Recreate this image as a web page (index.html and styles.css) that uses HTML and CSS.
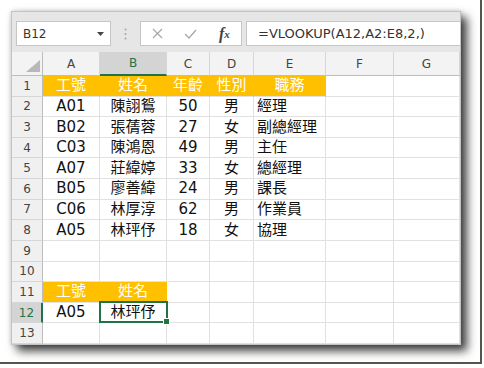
FILE: index.html
```html
<!DOCTYPE html>
<html lang="zh-Hant">
<head>
    <meta charset="utf-8">
    <title>VLOOKUP 範例</title>
    <link rel="stylesheet" href="styles.css">
</head>

<body>
<div class="shot">
    <div class="excel">
        <div class="toolbar">
            <div class="namebox">
                <span>B12</span>
                <svg width="7" height="4" viewBox="0 0 7 4"><polygon points="0,0 7,0 3.5,4" fill="#444"/></svg>
            </div>
            <div class="grip">
                <svg width="3" height="12" viewBox="0 0 3 12">
                    <circle cx="1.5" cy="1.5" r="1" fill="#a6a6a6"/>
                    <circle cx="1.5" cy="6" r="1" fill="#a6a6a6"/>
                    <circle cx="1.5" cy="10.5" r="1" fill="#a6a6a6"/>
                </svg>
            </div>
            <div class="buttons">
                <span class="btn">
                    <svg width="11" height="11" viewBox="0 0 11 11"><path d="M1 1 L10 10 M10 1 L1 10" stroke="#a8a8a8" stroke-width="1.2"/></svg>
                </span>
                <span class="btn">
                    <svg width="13" height="10" viewBox="0 0 13 10"><path d="M1 5 L5 9 L12 1" stroke="#a8a8a8" stroke-width="1.3" fill="none"/></svg>
                </span>
                <span class="btn fx">f<sub>x</sub></span>
            </div>
            <div class="formula">=VLOOKUP(A12,A2:E8,2,)</div>
        </div>

        <div class="sheet">
            <!-- en-têtes de colonnes -->
            <div class="corner">
                <svg width="14" height="12" viewBox="0 0 14 12"><polygon points="14,0 14,12 0,12" fill="#b8b8b8"/></svg>
            </div>
            <div class="colhead">A</div>
            <div class="colhead active">B</div>
            <div class="colhead">C</div>
            <div class="colhead">D</div>
            <div class="colhead">E</div>
            <div class="colhead">F</div>
            <div class="colhead">G</div>

            <div class="rowhead">1</div>
            <div class="c y">工號</div>
            <div class="c y">姓名</div>
            <div class="c y">年齡</div>
            <div class="c y">性別</div>
            <div class="c y">職務</div>
            <div class="c"></div>
            <div class="c"></div>

            <div class="rowhead">2</div>
            <div class="c">A01</div>
            <div class="c">陳詡鴛</div>
            <div class="c">50</div>
            <div class="c">男</div>
            <div class="c l">經理</div>
            <div class="c"></div>
            <div class="c"></div>

            <div class="rowhead">3</div>
            <div class="c">B02</div>
            <div class="c">張蒨蓉</div>
            <div class="c">27</div>
            <div class="c">女</div>
            <div class="c l">副總經理</div>
            <div class="c"></div>
            <div class="c"></div>

            <div class="rowhead">4</div>
            <div class="c">C03</div>
            <div class="c">陳鴻恩</div>
            <div class="c">49</div>
            <div class="c">男</div>
            <div class="c l">主任</div>
            <div class="c"></div>
            <div class="c"></div>

            <div class="rowhead">5</div>
            <div class="c">A07</div>
            <div class="c">莊緯婷</div>
            <div class="c">33</div>
            <div class="c">女</div>
            <div class="c l">總經理</div>
            <div class="c"></div>
            <div class="c"></div>

            <div class="rowhead">6</div>
            <div class="c">B05</div>
            <div class="c">廖善緯</div>
            <div class="c">24</div>
            <div class="c">男</div>
            <div class="c l">課長</div>
            <div class="c"></div>
            <div class="c"></div>

            <div class="rowhead">7</div>
            <div class="c">C06</div>
            <div class="c">林厚淳</div>
            <div class="c">62</div>
            <div class="c">男</div>
            <div class="c l">作業員</div>
            <div class="c"></div>
            <div class="c"></div>

            <div class="rowhead">8</div>
            <div class="c">A05</div>
            <div class="c">林玶伃</div>
            <div class="c">18</div>
            <div class="c">女</div>
            <div class="c l">協理</div>
            <div class="c"></div>
            <div class="c"></div>

            <div class="rowhead">9</div>
            <div class="c"></div>
            <div class="c"></div>
            <div class="c"></div>
            <div class="c"></div>
            <div class="c"></div>
            <div class="c"></div>
            <div class="c"></div>

            <div class="rowhead">10</div>
            <div class="c"></div>
            <div class="c"></div>
            <div class="c"></div>
            <div class="c"></div>
            <div class="c"></div>
            <div class="c"></div>
            <div class="c"></div>

            <div class="rowhead">11</div>
            <div class="c y">工號</div>
            <div class="c y">姓名</div>
            <div class="c"></div>
            <div class="c"></div>
            <div class="c"></div>
            <div class="c"></div>
            <div class="c"></div>

            <div class="rowhead active">12</div>
            <div class="c">A05</div>
            <div class="c sel">林玶伃</div>
            <div class="c"></div>
            <div class="c"></div>
            <div class="c"></div>
            <div class="c"></div>
            <div class="c"></div>

            <div class="rowhead">13</div>
            <div class="c"></div>
            <div class="c"></div>
            <div class="c"></div>
            <div class="c"></div>
            <div class="c"></div>
            <div class="c"></div>
            <div class="c"></div>
        </div>
    </div>
</div>
</body>
</html>
```

FILE: styles.css
```css
body {
    margin: 0;
    background: #ffffff;
    font-family: "DejaVu Sans", "Noto Sans CJK TC", sans-serif;
}

.shot {
    width: 482px;
    height: 364px;
    box-sizing: border-box;
    padding: 11px 0 0 11px;
    border-right: 2px solid #56564e;
    border-bottom: 2px solid #56564e;
}

.excel {
    width: 450px;
    height: 334px;
    box-sizing: border-box;
    border: 1px solid #c4c4c4;
    background: #ffffff;
    box-shadow: 0 0 5px rgba(0, 0, 0, 0.18), 6px 6px 9px rgba(0, 0, 0, 0.75);
    display: flex;
    flex-direction: column;
    overflow: hidden;
}

/* barre de formule */
.toolbar {
    flex: none;
    height: 40px;
    box-sizing: border-box;
    display: flex;
    align-items: flex-start;
    padding: 9px 0 0 4px;
    background: #e6e6e6;
}

.namebox {
    width: 95px;
    height: 25px;
    box-sizing: border-box;
    display: flex;
    align-items: center;
    justify-content: space-between;
    padding: 0 6px 0 6px;
    border: 1px solid #c6c6c6;
    background: #ffffff;
    font-size: 12px;
    color: #333333;
}

.grip {
    width: 29px;
    height: 25px;
    display: flex;
    align-items: center;
    justify-content: center;
}

.buttons {
    width: 102px;
    height: 25px;
    box-sizing: border-box;
    display: flex;
    border: 1px solid #c6c6c6;
    background: #ffffff;
    margin-right: 4px;
}

.btn {
    width: 34px;
    display: flex;
    align-items: center;
    justify-content: center;
}

.fx {
    font-family: "Liberation Serif", serif;
    font-style: italic;
    font-weight: bold;
    font-size: 16px;
    color: #444444;
}

.fx sub {
    font-size: 11px;
    vertical-align: -2px;
}

.formula {
    flex: 1;
    height: 25px;
    box-sizing: border-box;
    display: flex;
    align-items: center;
    padding-left: 11px;
    border: 1px solid #c6c6c6;
    border-right: none;
    background: #ffffff;
    font-size: 13px;
    color: #333333;
}

/* feuille */
.sheet {
    flex: 1;
    display: grid;
    grid-template-columns: 31px 57px 67px 43px 44px 72px 68px 66px;
    grid-template-rows: 24px repeat(13, 1fr);
}

.corner {
    display: flex;
    align-items: flex-end;
    justify-content: flex-end;
    padding: 0 2px 3px 0;
    background: #f3f3f3;
    border-right: 1px solid #bdbdbd;
    border-bottom: 1px solid #bdbdbd;
}

.colhead {
    display: flex;
    align-items: center;
    justify-content: center;
    background: #f3f3f3;
    border-right: 1px solid #d6d6d6;
    border-bottom: 1px solid #bdbdbd;
    font-size: 12px;
    color: #444444;
}

.colhead.active {
    background: #d4d4d4;
    border-bottom: 2px solid #217346;
    color: #217346;
}

.rowhead {
    display: flex;
    align-items: center;
    justify-content: center;
    background: #f0f0f0;
    border-right: 1px solid #bdbdbd;
    border-bottom: 1px solid #d6d6d6;
    font-size: 12px;
    color: #444444;
}

.rowhead.active {
    background: #d4d4d4;
    border-right: 2px solid #217346;
    color: #217346;
}

.c {
    display: flex;
    align-items: center;
    justify-content: center;
    border-right: 1px solid #e1e1e1;
    border-bottom: 1px solid #e1e1e1;
    font-size: 15px;
    line-height: 1;
    color: #111111;
    white-space: nowrap;
}

.c.l {
    justify-content: flex-start;
    padding-left: 3px;
}

.c.y {
    background: #ffc000;
    border-right-color: #ffc000;
    color: #ffffff;
}

.c.sel {
    position: relative;
}

.c.sel::after {
    content: "";
    position: absolute;
    left: -1px;
    top: -2px;
    right: -2px;
    bottom: -1px;
    border: 2px solid #217346;
}

.c.sel::before {
    content: "";
    position: absolute;
    right: -4px;
    bottom: -3px;
    width: 5px;
    height: 5px;
    background: #217346;
    border: 1px solid #ffffff;
    z-index: 1;
}
```
